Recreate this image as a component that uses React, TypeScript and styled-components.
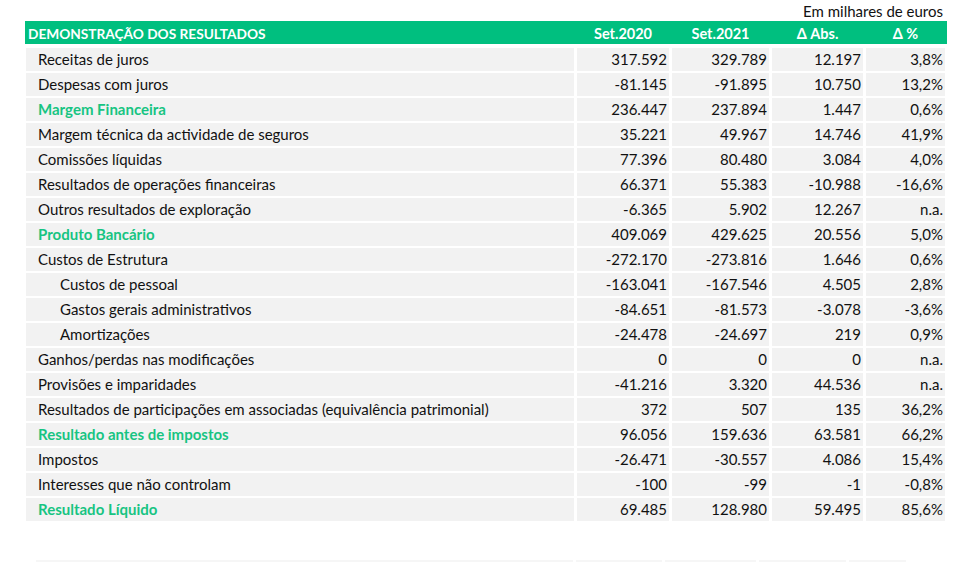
import styled, { createGlobalStyle } from "styled-components";

const GREEN = "#00bf7f";
const GREEN_TEXT = "#17c482";
const CELL = "#f2f2f2";
const COLS = "548px 92px 97px 91px 79px";

const Global = createGlobalStyle`
  body {
    margin: 0;
    background: #fff;
    font-family: Lato, "Open Sans", sans-serif;
    color: #111;
  }
`;

const Page = styled.div`
  width: 974px;
  height: 564px;
  padding-left: 26px;
  box-sizing: border-box;
  overflow: hidden;
`;

const Unit = styled.div`
  width: 917px;
  height: 21px;
  text-align: right;
  font-size: 15px;
  line-height: 22px;
`;

const Header = styled.div`
  display: grid;
  grid-template-columns: ${COLS};
  column-gap: 3px;
  margin: 0 0 4px -1px;
  padding: 0 2px 0 1px;
  width: 919px;
  height: 23px;
  background: ${GREEN};
  color: #fff;
  font-weight: bold;
  font-size: 14.5px;
  line-height: 25px;
`;

const HeadCell = styled.div<{ $first?: boolean }>`
  text-align: ${(p) => (p.$first ? "left" : "center")};
  padding-left: ${(p) => (p.$first ? "2px" : "0")};
  font-size: ${(p) => (p.$first ? "13.7px" : "inherit")};
  white-space: nowrap;
`;

const Row = styled.div`
  display: grid;
  grid-template-columns: ${COLS};
  column-gap: 3px;
  height: 22px;
  margin-bottom: 3px;
`;

const Label = styled.div<{ $indent?: boolean; $strong?: boolean }>`
  background: ${CELL};
  padding-left: ${(p) => (p.$indent ? "34px" : "12px")};
  font-size: 15px;
  line-height: 23px;
  white-space: nowrap;
  color: ${(p) => (p.$strong ? GREEN_TEXT : "#111")};
  font-weight: ${(p) => (p.$strong ? "bold" : "normal")};
`;

const Num = styled.div`
  background: ${CELL};
  text-align: right;
  padding-right: 2px;
  font-size: 15px;
  line-height: 23px;
  white-space: nowrap;
`;

const NextTable = styled.div`
  display: grid;
  grid-template-columns: 537px 86px 91px 87px 57px;
  column-gap: 3px;
  margin: 40px 0 0 10px;
  height: 2px;
  div {
    background: #f6f6f6;
  }
`;

type Line = {
  label: string;
  values: string[];
  indent?: boolean;
  strong?: boolean;
};

const lines: Line[] = [
  { label: "Receitas de juros", values: ["317.592", "329.789", "12.197", "3,8%"] },
  { label: "Despesas com juros", values: ["-81.145", "-91.895", "10.750", "13,2%"] },
  { label: "Margem Financeira", values: ["236.447", "237.894", "1.447", "0,6%"], strong: true },
  { label: "Margem técnica da actividade de seguros", values: ["35.221", "49.967", "14.746", "41,9%"] },
  { label: "Comissões líquidas", values: ["77.396", "80.480", "3.084", "4,0%"] },
  { label: "Resultados de operações financeiras", values: ["66.371", "55.383", "-10.988", "-16,6%"] },
  { label: "Outros resultados de exploração", values: ["-6.365", "5.902", "12.267", "n.a."] },
  { label: "Produto Bancário", values: ["409.069", "429.625", "20.556", "5,0%"], strong: true },
  { label: "Custos de Estrutura", values: ["-272.170", "-273.816", "1.646", "0,6%"] },
  { label: "Custos de pessoal", values: ["-163.041", "-167.546", "4.505", "2,8%"], indent: true },
  { label: "Gastos gerais administrativos", values: ["-84.651", "-81.573", "-3.078", "-3,6%"], indent: true },
  { label: "Amortizações", values: ["-24.478", "-24.697", "219", "0,9%"], indent: true },
  { label: "Ganhos/perdas nas modificações", values: ["0", "0", "0", "n.a."] },
  { label: "Provisões e imparidades", values: ["-41.216", "3.320", "44.536", "n.a."] },
  {
    label: "Resultados de participações em associadas (equivalência patrimonial)",
    values: ["372", "507", "135", "36,2%"],
  },
  { label: "Resultado antes de impostos", values: ["96.056", "159.636", "63.581", "66,2%"], strong: true },
  { label: "Impostos", values: ["-26.471", "-30.557", "4.086", "15,4%"] },
  { label: "Interesses que não controlam", values: ["-100", "-99", "-1", "-0,8%"] },
  { label: "Resultado Líquido", values: ["69.485", "128.980", "59.495", "85,6%"], strong: true },
];

const App = () => (
  <>
    <Global />
    <Page>
      <Unit>Em milhares de euros</Unit>
      <Header>
        <HeadCell $first>DEMONSTRAÇÃO DOS RESULTADOS</HeadCell>
        <HeadCell>Set.2020</HeadCell>
        <HeadCell>Set.2021</HeadCell>
        <HeadCell>Δ Abs.</HeadCell>
        <HeadCell>Δ %</HeadCell>
      </Header>
      {lines.map((l) => (
        <Row key={l.label}>
          <Label $indent={l.indent} $strong={l.strong}>
            {l.label}
          </Label>
          {l.values.map((v, i) => (
            <Num key={i}>{v}</Num>
          ))}
        </Row>
      ))}
      <NextTable>
        <div />
        <div />
        <div />
        <div />
        <div />
      </NextTable>
    </Page>
  </>
);

export default App;
